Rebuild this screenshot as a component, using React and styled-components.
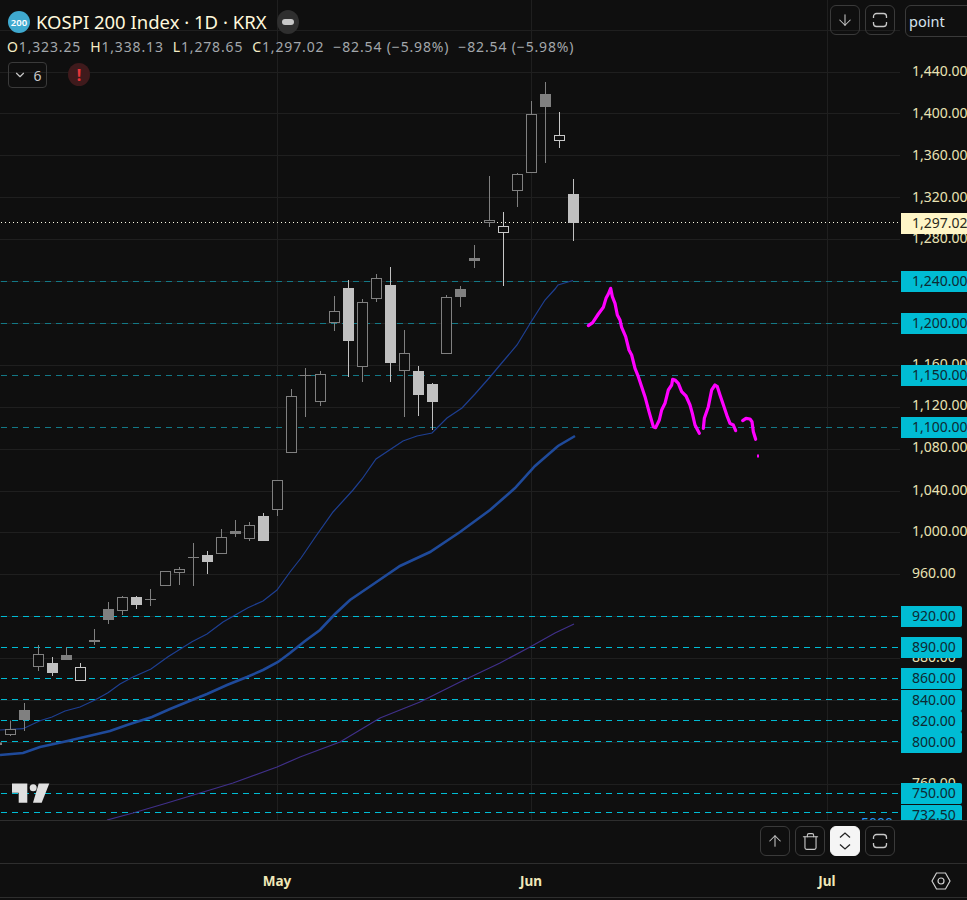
import React from "react";
import styled, { createGlobalStyle } from "styled-components";
import { ArrowDown, ArrowUp, Trash, ChevronDown } from "lucide-react";

const G = createGlobalStyle`
  html, body { margin: 0; padding: 0; background: #0f0f0f; }
  #root { width: 967px; height: 900px; overflow: hidden; }
`;
const FONT = `"Noto Sans", Roboto, Arial, sans-serif`;

const Page = styled.div`
  width: 967px; height: 900px; background: #0f0f0f; display: flex; flex-direction: column;
  font-family: ${FONT}; overflow: hidden;
`;
const ChartArea = styled.div`display: flex; height: 820px; flex: none; overflow: hidden;`;
const Plot = styled.div`position: relative; width: 900px; flex: none; overflow: hidden;`;
const ChartSvg = styled.svg`display: block; width: 900px; height: 820px;`;
const PriceAxis = styled.div`position: relative; flex: 1; overflow: hidden;`;
const Legend = styled.div`position: absolute; left: 8px; top: 9px; display: flex; flex-direction: column; align-items: flex-start;`;
const TitleRow = styled.div`display: flex; align-items: center; height: 26px;`;
const Logo200 = styled.div`
  width: 22px; height: 22px; border-radius: 50%; background: #3fa9cf; color: #fff; font-size: 9.5px; font-weight: 600;
  display: flex; align-items: center; justify-content: center; margin-right: 6px;
`;
const Title = styled.div`color: #fff8dc; font-size: 18.5px; line-height: 26px; white-space: nowrap;`;
const StatusPill = styled.div`
  width: 22px; height: 24px; border-radius: 50%; background: #2f2f2f; display: flex; align-items: center;
  justify-content: center; margin-left: 10px;
  &::after { content: ""; width: 12px; height: 6px; border-radius: 3px; background: #c8c8c8; }
`;
const Ohlc = styled.div`display: flex; margin-left: -1px; height: 22px; align-items: center; font-size: 14px; letter-spacing: 0.85px; white-space: nowrap; gap: 9px;`;
const Item = styled.span`color: #a3a7ab;`;
const Key = styled.span`color: #f5edc4;`;
const CollapseRow = styled.div`display: flex; align-items: center; margin-top: 5px; gap: 21px;`;
const Collapse = styled.div`
  width: 39px; height: 26px; box-sizing: border-box; border: 1px solid #3a3a3a; border-radius: 4px; display: flex; align-items: center;
  justify-content: center; gap: 6px; color: #c8c8c8; font-size: 14px;
`;
const Alert = styled.div`
  width: 22px; height: 23px; margin-top: -1px; border-radius: 50%; background: #3f1a1c; color: #e8353a; font-weight: 700; font-size: 16px;
  display: flex; align-items: center; justify-content: center;
`;
const TopTools = styled.div`position: absolute; top: 5px; right: 5px; display: flex; gap: 5px;`;
const IconBtn = styled.button`
  width: 30px; height: 30px; padding: 0; box-sizing: border-box; border-radius: 6px; display: flex; align-items: center; justify-content: center;
  border: 1px solid ${p => (p.$active ? "#f5f5f5" : "#3a3a3a")}; background: ${p => (p.$active ? "#f5f5f5" : "transparent")};
  color: ${p => (p.$active ? "#222" : "#c8c8c8")};
`;
const ScaleInput = styled.div`
  position: absolute; top: 5px; left: 5px; width: 80px; height: 32px; box-sizing: border-box; border: 1px solid #3a3a3a;
  border-radius: 6px 0 0 6px; color: #d5e2ee; font-size: 14.5px; line-height: 30px; padding-left: 3px;
`;
const TickLabel = styled.div`
  position: absolute; left: 12px; height: 20px; margin-top: -11px; line-height: 20px; font-size: 14px; color: #e9e2b4; white-space: nowrap;
`;
const Tag = styled.div`
  position: absolute; left: 1px; width: ${p => (p.$wide ? "72px" : "60.5px")}; height: 21px; margin-top: -10.5px; padding-left: 11px; box-sizing: border-box;
  line-height: 20px; font-size: 14px; color: #0d2a33; white-space: nowrap; background: ${p => (p.$last ? "#fff6c7" : "#00bcd4")};
  border-radius: ${p => (p.$wide ? "0" : "0 2px 2px 0")};
  ${p => p.$last && "color: #2b2a20;"}
`;
const Toolbar = styled.div`
  height: 43px; box-sizing: border-box; flex: none; border-top: 1px solid #2e2e2e; padding: 5px 72px 0 0; display: flex; justify-content: flex-end; gap: 5px;
`;
const TimeAxis = styled.div`
  position: relative; height: 35px; flex: none; box-sizing: border-box; border-top: 1px solid #2e2e2e; border-bottom: 1px solid #2e2e2e;
`;
const TimeLabel = styled.span`
  position: absolute; top: 8px; transform: translateX(-50%); font-size: 13.5px; font-weight: 700; color: #f0e8b8; line-height: 18px;
`;
const SettingsIcon = styled.svg`position: absolute; left: 931px; top: 8px;`;
const BlueText = styled.text`font-family: ${FONT}; font-size: 14px;`;

const FrameIcon = () => (
  <svg width="16" height="16" viewBox="0 0 16 16" fill="none" stroke="currentColor" strokeWidth="1.3">
    <path d="M1.5 6V4.5a3 3 0 0 1 3-3h7a3 3 0 0 1 3 3V6M1.5 10v1.5a3 3 0 0 0 3 3h7a3 3 0 0 0 3-3V10" />
  </svg>
);
const UpDownIcon = () => (
  <svg width="16" height="20" viewBox="0 0 16 20" fill="none" stroke="currentColor" strokeWidth="1.3">
    <path d="M3 6.5 8 2l5 4.5M3 13.5 8 18l5-4.5" />
  </svg>
);

const GREY = "#808080", LIGHT = "#c0c0c0";
// x, wickTop, wickBottom, bodyTop, bodyBottom, filled, tone
const candles = [
  [-4, 741, 746, 742.5, 745, 1, 0], [10, 720.5, 736, 729.5, 734.5, 0, 0], [24, 703, 731, 710, 720, 1, 0], [38, 645, 671, 654.5, 666.5, 0, 0],
  [52, 657, 676, 663, 673, 1, 1], [66, 647, 660, 655, 660, 1, 0], [80, 663, 681, 667.5, 680.5, 0, 2], [94, 629, 645, 640, 642, 1, 0],
  [108, 602, 624, 609, 620, 1, 0], [122, 596, 615, 597.5, 610.5, 0, 0], [136, 596, 609, 597, 605, 1, 1], [150, 589, 606, 599, 600, 1, 0],
  [165, 571, 586, 571.5, 585.5, 0, 0], [179, 567, 585, 569.5, 572.5, 0, 0], [193, 543, 586, 557, 558, 1, 0], [207, 551, 574, 555, 562, 1, 1],
  [221, 529, 553, 537.5, 553.5, 0, 0], [235, 520, 537, 531, 534, 1, 0], [249, 522, 541, 525.5, 538.5, 0, 0], [263, 513, 541, 516, 541, 1, 1],
  [277, 480, 516, 480.5, 509.5, 0, 0], [291, 389, 453, 396.5, 452.5, 0, 0], [305, 368, 417, 375, 376, 1, 0], [320, 371, 406, 374.5, 401.5, 0, 0],
  [334, 296, 331, 311.5, 322.5, 0, 0], [348, 280, 377, 288, 341, 1, 1], [362, 299, 382, 302.5, 366.5, 0, 0], [376, 274, 302, 278.5, 298.5, 0, 0],
  [390, 267, 382, 285, 363, 1, 1], [404, 330, 417, 353.5, 370.5, 0, 0], [418, 366, 416, 371, 395, 1, 1], [432, 383, 430, 384, 402, 1, 1],
  [446, 295, 354, 297.5, 353.5, 0, 0], [460, 286, 307, 289, 297, 1, 0], [474, 245, 268, 258, 261, 1, 0], [489, 176, 227, 220.5, 222.5, 0, 0],
  [503, 212, 286, 226.5, 232.5, 0, 2], [517, 173, 207, 174.5, 190.5, 0, 0], [531, 101, 173, 114.5, 172.5, 0, 0], [545, 82, 163, 94, 107, 1, 0],
  [559, 112, 148, 135.5, 140.5, 0, 2], [573, 179, 241, 194, 223, 1, 1],
];

const hLines = [30, 72, 113, 155, 197, 239, 281, 323, 365, 407, 449, 491, 532, 574, 616, 658, 700, 742, 784];
const dimDash = [281, 323, 375.5, 427];
const brightDash = [616, 647, 678, 699.5, 720.5, 741.5, 793.5, 812.5];
const pts = a => a.map(p => p.join(",")).join(" ");
const ma1 = [[0,730],[23,728.7],[40,720.7],[52,717],[65,711],[80,707],[95,700],[108,692.7],[120,684],[133,677],[151,669],[168,656.7],[192,641.7],[207,634],[223,622],[248,607.7],[263,601],[277,590],[290,572],[301,558],[316,536],[333,512],[353,490],[362,479],[376,459],[403,441],[417,436],[432,433],[447,418],[462,408],[475,394],[490,377],[500,365],[517,345],[531,322],[545,300],[555,289],[558,285],[573,280.5]];
const ma2 = [[0,755],[23,753],[40,747],[63,742],[93,735],[110,731],[127,725],[152,717],[170,709],[192,700],[207,694],[227,685],[247,677],[263,670],[278,662],[290,653],[305,641],[320,630],[335,614],[350,600],[375,583],[400,566],[430,552],[460,532],[490,510],[515,488],[535,466],[558,446],[575,436]];
const ma3 = [[107,820],[133,813],[167,803],[200,793],[233,783],[277,767],[300,757],[340,742],[380,718],[420,702],[460,682],[500,663],[530,647],[555,633],[574,624]];
const draw1 = [[55,167],[68,158],[85,132],[100,112],[108,85],[115,72],[122,55],[127,80],[135,100],[142,135],[150,150],[155,172],[167,200],[177,240],[185,255],[195,295],[205,320],[215,350],[225,380],[237,425],[250,470],[257,473],[268,450],[275,420],[285,400],[295,360],[305,345],[308,328],[315,330],[325,340],[335,365],[348,378],[360,405],[367,430],[375,465],[388,490]];
const draw2 = [[400,475],[403,445],[415,410],[425,360],[435,345],[442,350],[450,375],[462,410],[472,440],[480,460],[490,465],[497,482]];
const draw3 = [[518,452],[528,445],[540,447],[546,455],[550,485],[557,508]];

const ticks = [[72,"1,440.00"],[114,"1,400.00"],[156,"1,360.00"],[198,"1,320.00"],[239,"1,280.00"],[365,"1,160.00"],[406,"1,120.00"],[448,"1,080.00"],[491,"1,040.00"],[532,"1,000.00"],[574,"960.00"],[658,"880.00"],[784,"760.00"]];
const tags = [[223,"1,297.02",1,1],[281,"1,240.00",1],[323,"1,200.00",1],[375.5,"1,150.00",1],[427.5,"1,100.00",1],[616.5,"920.00"],[647.5,"890.00"],[678.5,"860.00"],[700,"840.00"],[721,"820.00"],[742,"800.00"],[793.5,"750.00"],[815,"732.50"]];
const times = [[277,"May"],[531,"Jun"],[827,"Jul"]];

const Candle = ({ c }) => {
  const [x, wt, wb, bt, bb, filled, tone] = c;
  const color = tone === 0 ? GREY : tone === 2 ? "#c8c8c8" : LIGHT;
  const cx = x + 0.5;
  return (
    <g>
      <line x1={cx} x2={cx} y1={wt} y2={wb} stroke={color} strokeWidth="1" />
      {filled
        ? <rect x={cx - 5.5} y={bt} width="11" height={bb - bt} fill={color} />
        : <rect x={cx - 5} y={bt} width="10" height={bb - bt} fill="#0f0f0f" stroke={color} strokeWidth="1" />}
    </g>
  );
};

export default function App() {
  return (
    <Page>
      <G />
      <ChartArea>
        <Plot>
          <ChartSvg viewBox="0 0 900 820">
            {hLines.map(y => <line key={y} x1="0" x2="900" y1={y + 0.5} y2={y + 0.5} stroke="#1f1f1f" />)}
            {[277, 531, 827].map(x => <line key={x} x1={x + 0.5} x2={x + 0.5} y1="0" y2="820" stroke="#1f1f1f" />)}
            {dimDash.map(y => <line key={y} x1="1" x2="900" y1={Math.floor(y) + 0.5} y2={Math.floor(y) + 0.5} stroke="#137886" strokeDasharray="6 5" />)}
            {brightDash.map(y => <line key={y} x1="1" x2="900" y1={Math.floor(y) + 0.5} y2={Math.floor(y) + 0.5} stroke="#00bcd4" strokeDasharray="6 5" />)}
            <line x1="1" x2="900" y1="222.5" y2="222.5" stroke="#fffde8" strokeDasharray="1 3" />
            <polyline points={pts(ma3)} fill="none" stroke="#40308a" strokeWidth="1.2" />
            <polyline points={pts(ma2)} fill="none" stroke="#1f4a9a" strokeWidth="2.6" />
            <polyline points={pts(ma1)} fill="none" stroke="#1e3f92" strokeWidth="1.2" />
            {candles.map(c => <Candle key={c[0]} c={c} />)}
            <g fill="none" stroke="#ff00ff" strokeWidth="3.2" strokeLinecap="round" strokeLinejoin="round">
              <polyline points={pts(draw1.map(([x, y]) => [570 + x / 3, 270 + y / 3]))} />
              <polyline points={pts(draw2.map(([x, y]) => [570 + x / 3, 270 + y / 3]))} />
              <polyline points={pts(draw3.map(([x, y]) => [570 + x / 3, 270 + y / 3]))} />
            </g>
            <rect x="757" y="454.5" width="2" height="3" fill="#ff00ff" />
            <g fill="#e0e0e0">
              <polygon points="12,783.5 27.3,783.5 27.3,802.7 18.7,802.7 18.7,792.7 12,792.7" />
              <circle cx="33.2" cy="787.8" r="3.5" />
              <polygon points="38.7,783.5 49.3,783.5 41.7,802.7 33,802.7" />
            </g>
            <BlueText x="861" y="827.5" fill="#2196f3">5000</BlueText>
          </ChartSvg>
          <Legend>
            <TitleRow>
              <Logo200>200</Logo200>
              <Title>KOSPI 200 Index · 1D · KRX</Title>
              <StatusPill />
            </TitleRow>
            <Ohlc>
              <Item><Key>O</Key>1,323.25</Item>
              <Item><Key>H</Key>1,338.13</Item>
              <Item><Key>L</Key>1,278.65</Item>
              <Item><Key>C</Key>1,297.02</Item>
              <Item>−82.54 (−5.98%)</Item>
              <Item>−82.54 (−5.98%)</Item>
            </Ohlc>
            <CollapseRow>
              <Collapse><ChevronDown size={14} strokeWidth={2} />6</Collapse>
              <Alert>!</Alert>
            </CollapseRow>
          </Legend>
          <TopTools>
            <IconBtn><ArrowDown size={18} strokeWidth={1.4} /></IconBtn>
            <IconBtn><FrameIcon /></IconBtn>
          </TopTools>
        </Plot>
        <PriceAxis>
          <ScaleInput>point</ScaleInput>
          {ticks.map(([y, t]) => <TickLabel key={t} style={{ top: y }}>{t}</TickLabel>)}
          {tags.map(([y, t, wide, last]) => <Tag key={t} $wide={wide} $last={last} style={{ top: y }}>{t}</Tag>)}
        </PriceAxis>
      </ChartArea>
      <Toolbar>
        <IconBtn><ArrowUp size={18} strokeWidth={1.4} /></IconBtn>
        <IconBtn><Trash size={19} strokeWidth={1.4} /></IconBtn>
        <IconBtn $active><UpDownIcon /></IconBtn>
        <IconBtn><FrameIcon /></IconBtn>
      </Toolbar>
      <TimeAxis>
        {times.map(([x, t]) => <TimeLabel key={t} style={{ left: x }}>{t}</TimeLabel>)}
        <SettingsIcon width="20" height="18" viewBox="0 0 20 18" fill="none" stroke="#d0d0d0" strokeWidth="1.2">
          <polygon points="1,9 5.5,1 14.5,1 19,9 14.5,17 5.5,17" />
          <circle cx="10" cy="9" r="3" />
        </SettingsIcon>
      </TimeAxis>
    </Page>
  );
}
